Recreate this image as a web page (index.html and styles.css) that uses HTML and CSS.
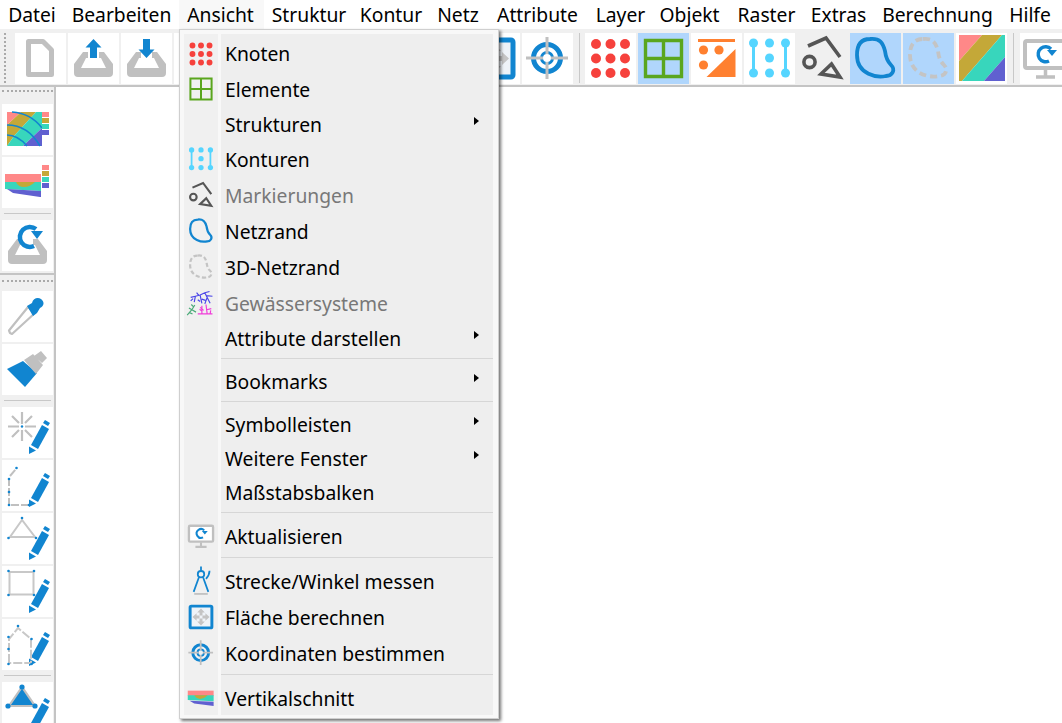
FILE: index.html
```html
<!DOCTYPE html>
<html lang="de">
<head>
<meta charset="utf-8">
<title>Ansicht</title>
<link rel="stylesheet" href="styles.css">
</head>
<body>
<svg class="defs" xmlns="http://www.w3.org/2000/svg">
  <symbol id="i-dots" viewBox="0 0 51 51"><g fill="#f6413c"><circle cx="11" cy="11" r="5"/><circle cx="25.5" cy="11" r="5"/><circle cx="40" cy="11" r="5"/><circle cx="11" cy="25.5" r="5"/><circle cx="25.5" cy="25.5" r="5"/><circle cx="40" cy="25.5" r="5"/><circle cx="11" cy="40" r="5"/><circle cx="25.5" cy="40" r="5"/><circle cx="40" cy="40" r="5"/></g></symbol>
  <symbol id="i-grid" viewBox="0 0 51 51"><path d="M7.5 7.5H43.5V43.5H7.5ZM25.5 7.5V43.5M7.5 25.5H43.5" fill="none" stroke="#5aa61e" stroke-width="3.4"/></symbol>
  <symbol id="i-struct" viewBox="0 0 51 51"><g fill="#ff8030"><rect x="7" y="6" width="37" height="3"/><circle cx="12.5" cy="17" r="4.6"/><circle cx="28" cy="17" r="4.6"/><circle cx="12.5" cy="32" r="4.6"/><path d="M44.5 16V44H15.5Z"/></g></symbol>
  <symbol id="i-contour" viewBox="0 0 51 51"><g fill="#55d5ff"><path d="M8 10h3v30H8ZM40 10h3v30h-3Z"/><circle cx="9.5" cy="10" r="4.5"/><circle cx="9.5" cy="40" r="4.5"/><circle cx="41.5" cy="10" r="4.5"/><circle cx="41.5" cy="40" r="4.5"/><circle cx="25.5" cy="10" r="4.5"/><circle cx="25.5" cy="25" r="4.5"/><circle cx="25.5" cy="40" r="4.5"/></g></symbol>
  <symbol id="i-mark" viewBox="0 0 51 51"><g fill="none" stroke="#555" stroke-width="3.6"><path d="M11 13L29 5L43 24"/><circle cx="12.5" cy="29" r="5.6"/><path d="M34.5 31L43 44L24 41Z"/></g></symbol>
  <symbol id="i-blob" viewBox="0 0 51 51"><path d="M20 6C30 5 33 10 35 18C36 26 38 29 41 32C46 37 42 43 36 43C28 45 7 42 7 22C7 12 11 6 20 6Z" fill="none" stroke="#1185d0" stroke-width="3.8"/></symbol>
  <symbol id="i-blob3d" viewBox="0 0 51 51"><path d="M20 6C30 5 33 10 35 18C36 26 38 29 41 32C46 37 42 43 36 43C28 45 7 42 7 22C7 12 11 6 20 6Z" fill="none" stroke="#c4c4c4" stroke-width="3.8" stroke-dasharray="7 4"/></symbol>
  <symbol id="i-stripes" viewBox="0 0 51 51"><path d="M3 2H26L3 28Z" fill="#ff8888"/><path d="M26 2H46L6 48H3V28Z" fill="#c4a838"/><path d="M46 2H49V24L28 48H6Z" fill="#38d6bc"/><path d="M49 24V48H28Z" fill="#6060d0"/></symbol>
  <symbol id="i-target" viewBox="0 0 51 51"><circle cx="25" cy="25" r="13.5" fill="none" stroke="#1185d0" stroke-width="5"/><circle cx="25" cy="25" r="5.5" fill="none" stroke="#1185d0" stroke-width="3"/><path d="M25 4V21M25 29V46M4 25H21M29 25H46" stroke="#c0c0c0" stroke-width="3"/></symbol>
  <symbol id="i-area" viewBox="0 0 51 51"><rect x="7" y="7" width="37" height="37" rx="2" fill="#eef3f8" stroke="#1185d0" stroke-width="5"/><g fill="#c4c4c4"><path d="M25.5 11L32 18H28V23H23V18H19Z"/><path d="M25.5 40L32 33H28V28H23V33H19Z"/><path d="M11 25.5L18 19V23H23V28H18V32Z"/><path d="M40 25.5L33 19V23H28V28H33V32Z"/></g></symbol>
  <symbol id="i-doc" viewBox="0 0 51 51"><path d="M13.5 8.5H28L36.5 17V41.5H13.5Z" fill="#fff" stroke="#c0c0c0" stroke-width="5" stroke-linejoin="round"/></symbol>
  <symbol id="i-tray" viewBox="0 0 51 51"><path d="M6 31L15 19H20V25H18L13 35H38L33 25H31V19H36L45 31V40Q45 44 41 44H10Q6 44 6 40Z" fill="#c0c0c0"/></symbol>
  <symbol id="i-up" viewBox="0 0 51 51"><use href="#i-tray"/><path d="M25.500 6L33.500 14.500H29V25H22V14.500H17.500Z" fill="#1185d0"/></symbol>
  <symbol id="i-down" viewBox="0 0 51 51"><use href="#i-tray"/><path d="M25.500 25L33.500 16.500H29V6H22V16.500H17.500Z" fill="#1185d0"/></symbol>
  <symbol id="i-trayref" viewBox="0 0 51 51"><use href="#i-tray"/><path d="M34 9A10 10 0 1 0 32 26" fill="none" stroke="#1185d0" stroke-width="4.5"/><path d="M29 11H41L35 19Z" fill="#1185d0"/></symbol>
  <symbol id="i-monitor" viewBox="0 0 51 51"><rect x="5" y="8" width="41" height="27" rx="2" fill="#fff" stroke="#c0c0c0" stroke-width="4"/><path d="M25.5 36V43M16 44H35" stroke="#c0c0c0" stroke-width="3.5"/><path d="M31 16A7.5 7.5 0 1 0 29 28" fill="none" stroke="#1185d0" stroke-width="3.4"/><path d="M27 17H37L32 23Z" fill="#1185d0"/></symbol>
  <symbol id="i-map" viewBox="0 0 51 51"><path d="M5 8H19L5 21Z" fill="#ff8888"/><path d="M19 8H34L12 32L5 42V21Z" fill="#c4a838"/><path d="M34 8H40V24L21 42H5L12 32Z" fill="#38d6bc"/><path d="M40 24V42H21Z" fill="#6060d0"/><path d="M10 8C24 9 34 16 40 24M5 21C18 21 30 28 38 42M5 31C13 31 20 36 25 42" fill="none" stroke="#1185d0" stroke-width="1.6"/><rect x="40" y="8" width="7" height="5" fill="#ff8888"/><rect x="40" y="14" width="7" height="5" fill="#c4a838"/><rect x="40" y="20" width="7" height="5" fill="#38d6bc"/><rect x="40" y="26" width="7" height="5" fill="#6060d0"/></symbol>
  <symbol id="i-sectionleg" viewBox="0 0 51 51"><path d="M3 17H39V25H3Z" fill="#ff8888"/><path d="M3 25H39V34L3 32Z" fill="#38d6bc"/><path d="M14 25H33Q28 30 22 30T14 25Z" fill="#c4a838"/><path d="M5 32L39 34V40H38L11 36Z" fill="#6060d0"/><rect x="40" y="8" width="7" height="5" fill="#ff8888"/><rect x="40" y="14" width="7" height="5" fill="#c4a838"/><rect x="40" y="20" width="7" height="5" fill="#38d6bc"/><rect x="40" y="26" width="7" height="5" fill="#6060d0"/></symbol>
  <symbol id="i-section" viewBox="0 0 51 51"><path d="M3 13H47V22H3Z" fill="#ff8888"/><path d="M3 21H47V31L3 29Z" fill="#38d6bc"/><path d="M14 21H37Q30 27 24 27T14 21Z" fill="#c4a838"/><path d="M6 30L47 32V39L14 35Z" fill="#6060d0"/></symbol>
  <symbol id="i-dropper" viewBox="0 0 51 51"><path d="M8 42L7 39.500L26 16L33 22L10 43Z" fill="#fff" stroke="#c0c0c0" stroke-width="2.200" stroke-linejoin="round"/><path d="M25 15L30 12C31 7 36 6 39 8C43 11 42 15 38 17L35 22L31 25Z" fill="#1185d0"/></symbol>
  <symbol id="i-brush" viewBox="0 0 51 51"><path d="M5 25L21 17L35 29L23 43Z" fill="#1185d0"/><path d="M22 16L31 10L41 21L34 30ZM32 12L39 7L45 14L40 19Z" fill="#c0c0c0"/></symbol>
  <symbol id="i-pen" viewBox="0 0 51 51"><path d="M29 38L40 18L47 22L36 42Z" fill="#1185d0"/><path d="M41 16L43 13L48 16L46 19Z" fill="#1185d0"/><path d="M27 47V39.500L34 43.500Z" fill="#1185d0"/></symbol>
  <symbol id="i-star" viewBox="0 0 51 51"><use href="#i-pen"/><path d="M20 5V17M20 23V34M6 19.500H17M23 19.500H34M10 9L17 16M23 23L30 30M30 9L23 16M17 23L10 30" stroke="#c0c0c0" stroke-width="2.2"/><circle cx="20" cy="19.500" r="1.200" fill="#1185d0"/></symbol>
  <symbol id="i-poly" viewBox="0 0 51 51"><use href="#i-pen"/><path d="M7 18V44M9 45H26M8 16L14 9" stroke="#c0c0c0" stroke-width="2" stroke-dasharray="8 2"/><g fill="#1185d0"><circle cx="14.500" cy="8" r="1.300"/><circle cx="7" cy="19" r="1.300"/><circle cx="7" cy="32" r="1.300"/><circle cx="7" cy="45" r="1.300"/><circle cx="27" cy="45" r="1.300"/></g></symbol>
  <symbol id="i-tri" viewBox="0 0 51 51"><use href="#i-pen"/><path d="M20 7L8 24H33Z" fill="none" stroke="#c8c8c8" stroke-width="2"/><g fill="#1185d0"><circle cx="20" cy="5" r="1.300"/><circle cx="6.500" cy="25" r="1.300"/><circle cx="34" cy="25" r="1.300"/></g></symbol>
  <symbol id="i-rect" viewBox="0 0 51 51"><use href="#i-pen"/><path d="M7.500 6H31.500V28.500H7.500Z" fill="none" stroke="#c8c8c8" stroke-width="2"/><g fill="#1185d0"><circle cx="6.500" cy="5" r="1.300"/><circle cx="32" cy="5" r="1.300"/><circle cx="6.500" cy="29" r="1.300"/><circle cx="32" cy="29" r="1.300"/></g></symbol>
  <symbol id="i-penta" viewBox="0 0 51 51"><use href="#i-pen"/><path d="M7 44V20L16 9L29 20V44H7" fill="none" stroke="#c8c8c8" stroke-width="2" stroke-dasharray="9 2"/><g fill="#1185d0"><circle cx="16" cy="7" r="1.300"/><circle cx="6.500" cy="18" r="1.300"/><circle cx="29.500" cy="20" r="1.300"/><circle cx="6.500" cy="30" r="1.300"/><circle cx="6.500" cy="45" r="1.300"/><circle cx="29.500" cy="45" r="1.300"/></g></symbol>
  <symbol id="i-trifill" viewBox="0 0 51 51"><use href="#i-pen" y="3"/><path d="M20 5L7 24H33Z" fill="#1185d0" stroke="#c0c0c0" stroke-width="2.200"/><g fill="#1185d0"><circle cx="20" cy="5" r="2.600"/><circle cx="6" cy="24" r="2.600"/><circle cx="33" cy="24" r="2.600"/></g></symbol>
  <symbol id="i-river" viewBox="0 0 51 51"><g fill="none" stroke-width="2"><path d="M8 16L16 14L24 12L32 8L40 6M16 14L14 24M24 12L27 26M32 8L36 16L41 26M22 13L18 8M34 13L45 14M27 19L33 21M12 18L8 22M36 16L32 27M20 20L24 23" stroke="#4a45e8"/><path d="M2 46L10 37L15 29M10 37L5 34M10 37L17 41M13 32L9 28M6 42L11 44" stroke="#4aaa78"/><path d="M20 44H45M27 44V30M36 44L34 28M23 36L27 39M35 37L43 35M30 38L24 33M41 44L42 38" stroke="#f03cd8"/></g></symbol>
  <symbol id="i-compass" viewBox="0 0 51 51"><g fill="none" stroke="#1185d0" stroke-width="3"><circle cx="25.500" cy="14" r="5.500"/><path d="M25.500 1V8M22 19L13 44M29 19L38 44M34 22Q40 15 40 8"/></g><path d="M14 47.500H37" stroke="#c0c0c0" stroke-width="3"/></symbol>
</svg>

<nav class="menubar">
  <span class="mb mb-datei">Datei</span><span class="mb mb-bear">Bearbeiten</span><span class="mb mb-ans mb-active to-left">Ansicht</span><span class="mb mb-str to-right">Struktur</span><span class="mb mb-kon to-right">Kontur</span><span class="mb mb-netz">Netz</span><span class="mb mb-att">Attribute</span><span class="mb mb-lay to-right">Layer</span><span class="mb mb-obj to-left">Objekt</span><span class="mb mb-ras to-right">Raster</span><span class="mb mb-ext to-right">Extras</span><span class="mb mb-ber to-right">Berechnung</span><span class="mb mb-hil">Hilfe</span>
</nav>

<div class="toptools">
  <span class="handle-v"></span>
  <span class="tb"><svg class="ti"><use href="#i-doc"/></svg></span>
  <span class="tb"><svg class="ti"><use href="#i-up"/></svg></span>
  <span class="tb"><svg class="ti"><use href="#i-down"/></svg></span>
  <span class="tb"></span><span class="tb"></span><span class="tb"></span><span class="tb"></span><span class="tb"></span>
  <span class="tb tb-gapped"><svg class="ti"><use href="#i-area"/></svg></span>
  <span class="tb"><svg class="ti"><use href="#i-target"/></svg></span>
  <span class="vsep vsep-a"></span>
  <span class="tb"><svg class="ti"><use href="#i-dots"/></svg></span>
  <span class="tb on"><svg class="ti"><use href="#i-grid"/></svg></span>
  <span class="tb"><svg class="ti"><use href="#i-struct"/></svg></span>
  <span class="tb"><svg class="ti"><use href="#i-contour"/></svg></span>
  <span class="tb plain"><svg class="ti"><use href="#i-mark"/></svg></span>
  <span class="tb on"><svg class="ti"><use href="#i-blob"/></svg></span>
  <span class="tb on"><svg class="ti"><use href="#i-blob3d"/></svg></span>
  <span class="tb"><svg class="ti"><use href="#i-stripes"/></svg></span>
  <span class="vsep"></span>
  <span class="tb"><svg class="ti"><use href="#i-monitor"/></svg></span>
</div>

<div class="work">
  <aside class="sidetools">
    <span class="handle-h"></span>
    <span class="tb"><svg class="ti"><use href="#i-map"/></svg></span>
    <span class="tb"><svg class="ti"><use href="#i-sectionleg"/></svg></span>
    <span class="hsep"></span>
    <span class="tb"><svg class="ti"><use href="#i-trayref"/></svg></span>
    <span class="break"></span>
    <span class="handle-h handle-2"></span>
    <span class="tb"><svg class="ti"><use href="#i-dropper"/></svg></span>
    <span class="tb"><svg class="ti"><use href="#i-brush"/></svg></span>
    <span class="hsep"></span>
    <span class="tb"><svg class="ti"><use href="#i-star"/></svg></span>
    <span class="tb"><svg class="ti"><use href="#i-poly"/></svg></span>
    <span class="tb"><svg class="ti"><use href="#i-tri"/></svg></span>
    <span class="tb"><svg class="ti"><use href="#i-rect"/></svg></span>
    <span class="tb"><svg class="ti"><use href="#i-penta"/></svg></span>
    <span class="hsep"></span>
    <span class="tb"><svg class="ti"><use href="#i-trifill"/></svg></span>
  </aside>
  <main class="canvas"></main>
</div>

<div class="menu">
  <div class="menu-in">
    <div class="row r35"><svg class="mi"><use href="#i-dots"/></svg><span class="lb">Knoten</span></div>
    <div class="row r35"><svg class="mi"><use href="#i-grid"/></svg><span class="lb">Elemente</span></div>
    <div class="row r34"><span class="mi"></span><span class="lb">Strukturen</span><span class="arr"></span></div>
    <div class="row"><svg class="mi"><use href="#i-contour"/></svg><span class="lb">Konturen</span></div>
    <div class="row"><svg class="mi"><use href="#i-mark"/></svg><span class="lb dis">Markierungen</span></div>
    <div class="row"><svg class="mi"><use href="#i-blob"/></svg><span class="lb">Netzrand</span></div>
    <div class="row"><svg class="mi"><use href="#i-blob3d"/></svg><span class="lb">3D-Netzrand</span></div>
    <div class="row"><svg class="mi"><use href="#i-river"/></svg><span class="lb dis">Gewässersysteme</span></div>
    <div class="row r34"><span class="mi"></span><span class="lb">Attribute darstellen</span><span class="arr"></span></div>
    <div class="sep"></div>
    <div class="row r34"><span class="mi"></span><span class="lb">Bookmarks</span><span class="arr"></span></div>
    <div class="sep"></div>
    <div class="row r34"><span class="mi"></span><span class="lb">Symbolleisten</span><span class="arr"></span></div>
    <div class="row r34"><span class="mi"></span><span class="lb">Weitere Fenster</span><span class="arr"></span></div>
    <div class="row r34"><span class="mi"></span><span class="lb">Maßstabsbalken</span></div>
    <div class="sep"></div>
    <div class="row"><svg class="mi"><use href="#i-monitor"/></svg><span class="lb">Aktualisieren</span></div>
    <div class="sep"></div>
    <div class="row"><svg class="mi"><use href="#i-compass"/></svg><span class="lb">Strecke/Winkel messen</span></div>
    <div class="row"><svg class="mi"><use href="#i-area"/></svg><span class="lb">Fläche berechnen</span></div>
    <div class="row"><svg class="mi"><use href="#i-target"/></svg><span class="lb">Koordinaten bestimmen</span></div>
    <div class="sep"></div>
    <div class="row"><svg class="mi"><use href="#i-section"/></svg><span class="lb">Vertikalschnitt</span></div>
  </div>
</div>
</body>
</html>
```

FILE: styles.css
```css
* { box-sizing: border-box; }
html, body { margin: 0; padding: 0; }
body {
  width: 1062px;
  height: 723px;
  overflow: hidden;
  position: relative;
  background: #fff;
  color: #000;
  font-family: "Noto Sans", "Open Sans", sans-serif;
  font-size: 19.3px;
}
.defs { display: none; }

.menubar { display: flex; height: 29px; background: #fff; align-items: stretch; white-space: nowrap; }
.mb { display: flex; align-items: center; justify-content: center; height: 29px; flex: none; padding-bottom: 1px; }
.to-left { padding-right: 2px; }
.to-right { padding-left: 2px; }
.mb-datei { width: 64px; }
.mb-bear { width: 115px; }
.mb-ans { width: 85px; }
.mb-str { width: 88px; }
.mb-kon { width: 76px; }
.mb-netz { width: 60px; }
.mb-att { width: 99px; }
.mb-lay { width: 65px; }
.mb-obj { width: 77px; }
.mb-ras { width: 73px; }
.mb-ext { width: 71px; }
.mb-ber { width: 127px; }
.mb-hil { width: 60px; }
.mb-active { background: #f8f8f8; }

.toptools {
  display: flex;
  height: 58px;
  background: #f0f0f0;
  border-bottom: 2px solid #c4c4c4;
  padding: 4px 0 0 4px;
  gap: 2px;
  align-items: flex-start;
  overflow: hidden;
}
.handle-v {
  width: 3px;
  height: 50px;
  margin-right: 7px;
  border-left: 2px dotted #aaa;
}
.tb { width: 51px; height: 51px; flex: none; background: #fff; display: block; }
.tb.on { background: #b0d6fc; }
.tb.plain { background: #f0f0f0; }
.tb-gapped { margin-left: 30px; }
.ti { width: 51px; height: 51px; display: block; }
.vsep { width: 1px; height: 50px; background: #c8c8c8; margin: 0 4px; flex: none; }
.vsep-a { margin: 0 3px 0 4px; }

.work { display: flex; height: 636px; }
.sidetools {
  width: 56px;
  flex: none;
  background: #f0f0f0;
  border-right: 2px solid #c4c4c4;
  display: flex;
  flex-direction: column;
  align-items: flex-start;
  padding: 0 0 0 2px;
  gap: 2px;
  overflow: hidden;
}
.handle-h { display: block; width: 51px; height: 3px; margin: 3px 0 9px; border-top: 2px dotted #aaa; flex: none; }
.handle-2 { margin: 3px 0 6px; }
.hsep { width: 47px; height: 1px; margin: 3px 0 4px 2px; background: #c8c8c8; flex: none; }
.break { width: 56px; margin-left: -2px; height: 2px; background: #c4c4c4; flex: none; }
.canvas { flex: 1; background: #fff; }

.menu {
  position: absolute;
  left: 179px;
  top: 29px;
  width: 320px;
  height: 690px;
  background: #f8f8f8;
  border: 1px solid #cfcfcf;
  box-shadow: 2px 2px 3px rgba(0, 0, 0, .55);
  padding: 4px 5px 3px 4px;
}
.menu-in {
  height: 100%;
  padding-top: 2px;
  background: linear-gradient(to right, #f0f0f0 34px, #f8f8f8 34px, #f8f8f8 37px, #eee 37px);
}
.row { display: flex; align-items: center; height: 36px; position: relative; }
.r34 { height: 34px; }
.r35 { height: 35.500px; }
.mi { width: 30px; height: 30px; flex: none; margin: 0 2px; display: block; }
.lb { margin-left: 3px; padding-left: 4px; white-space: nowrap; }
.dis { color: #787878; }
.arr {
  position: absolute;
  left: 290px;
  top: calc(50% - 7px);
  width: 0;
  height: 0;
  border-left: 5px solid #000;
  border-top: 4.500px solid transparent;
  border-bottom: 4.500px solid transparent;
}
.sep { height: 9px; margin-left: 37px; position: relative; }
.sep::after { content: ""; position: absolute; left: 0; right: 0; top: 3px; height: 1px; background: #d6d6d6; }
```
